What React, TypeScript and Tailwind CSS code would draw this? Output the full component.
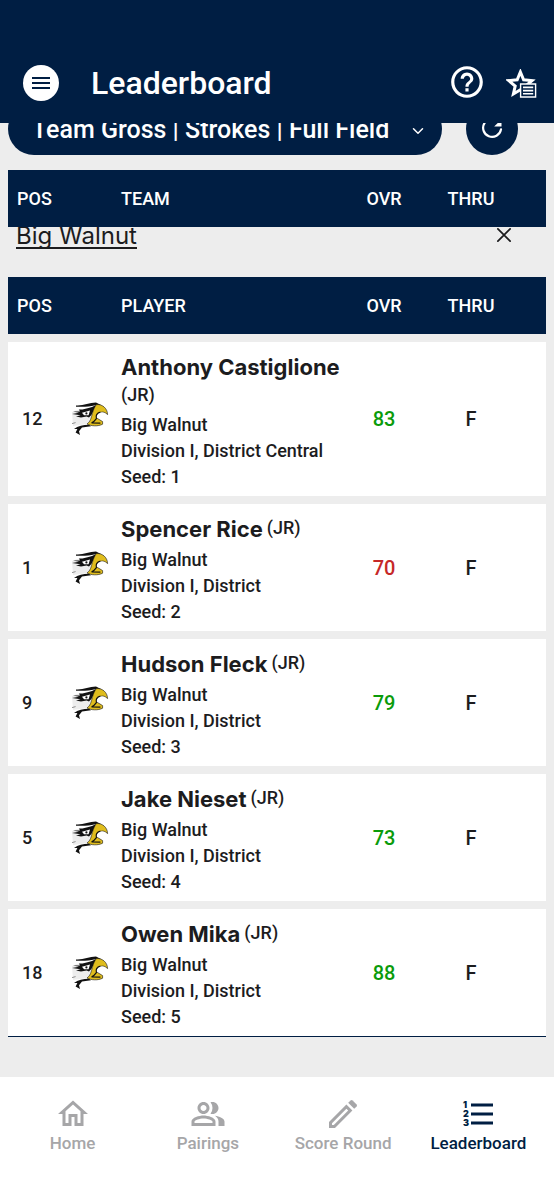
import { MdHelpOutline, MdOutlineHome, MdOutlinePeopleAlt } from "react-icons/md";
import { IoChevronDown, IoCloseOutline } from "react-icons/io5";

const PencilIcon = ({ className }: { className?: string }) => (
  <svg viewBox="0 0 36 36" className={className} fill="currentColor" aria-hidden="true">
    <path
      fillRule="evenodd"
      d="M4 32 V26 L21.4 8.6 L27.4 14.6 L10 32 Z M7 29 H8.8 L23.2 14.6 L21.4 12.8 L7 27.2 Z"
    />
    <path d="M23.2 6.8 L25.6 4.4 Q26.6 3.6 27.6 4.4 L31.6 8.4 Q32.4 9.4 31.6 10.4 L29.2 12.8 Z" />
  </svg>
);

const RankListIcon = ({ className }: { className?: string }) => (
  <svg viewBox="0 0 36 36" className={className} fill="currentColor" aria-hidden="true">
    <path d="M11 7.5 H33 V10.5 H11 Z M11 16.5 H33 V19.5 H11 Z M11 25.5 H33 V28.5 H11 Z" />
    <g fontSize="9" fontWeight="900" fontFamily="Inter, sans-serif">
      <text x="3" y="12">1</text>
      <text x="3" y="21">2</text>
      <text x="3" y="30">3</text>
    </g>
  </svg>
);

const players = [
  { pos: 12, name: "Anthony Castiglione", division: "Division I, District Central", seed: 1, score: 83, over: true },
  { pos: 1, name: "Spencer Rice", division: "Division I, District", seed: 2, score: 70, over: false },
  { pos: 9, name: "Hudson Fleck", division: "Division I, District", seed: 3, score: 79, over: true },
  { pos: 5, name: "Jake Nieset", division: "Division I, District", seed: 4, score: 73, over: true },
  { pos: 18, name: "Owen Mika", division: "Division I, District", seed: 5, score: 88, over: true },
];

const tabs = [
  { label: "Home", icon: MdOutlineHome, active: false },
  { label: "Pairings", icon: MdOutlinePeopleAlt, active: false },
  { label: "Score Round", icon: PencilIcon, active: false },
  { label: "Leaderboard", icon: RankListIcon, active: true },
];

const EagleLogo = () => (
  <svg viewBox="0 0 38 34" className="w-[38px] h-[34px]" aria-hidden="true">
    <path d="M1 10 L9 7 L20 14 L17 22 L2 24 Z" fill="#ededed" />
    <path d="M5 3.4 C12 4 18 .6 25 .6 L30 3 C24 2.4 19 4.8 14 4.8 L5 4.8 Z" fill="#111" />
    <path d="M8 7.6 C13 7.6 16 6.4 21 5 L24 3.6 L27 3.6 L22.4 9 L20.4 13 L18 15.6 L15.6 14.6 L10 15.4 L5 14.4 L9.6 13.2 L1 12 L8 10.8 L2 9.4 L9 9.4 Z" fill="#111" />
    <path d="M11 10.8 L19 8.6 L17.6 13.2 L13 13.2 Z" fill="#fff" />
    <circle cx="15.4" cy="11.4" r="1.1" fill="#111" />
    <path
      d="M25.4 2.6 C31 2 36.4 6 36.6 12.6 C34 10 32 9.6 29.4 10.4 C26 11.4 25.2 13.6 26 16.2 L31.6 19.6 L31.6 22.2 C27 24.6 20 24.2 16 22 C19.6 19.6 20.2 15.6 21.4 11.4 C22.4 7.6 23.6 5 25.4 2.6 Z"
      fill="#e0bd1d"
      stroke="#111"
      strokeWidth="0.6"
    />
    <path d="M29.4 10.4 L34 11 L28 15.6 L26 16.2 C25.2 13.6 26 11.4 29.4 10.4 Z" fill="#fff" />
    <path d="M29.4 10.2 C25.6 11 24.6 13.8 25.4 16.6 C24 18.6 22.4 20 20.6 20.8 L29.4 21.2" fill="none" stroke="#111" strokeWidth="1.2" />
    <path d="M1 21.6 L4.6 20.6" stroke="#777" strokeWidth="0.8" />
    <path d="M18 22.8 C12 22.8 7 24 3 27 L6.4 27 L4.6 30.6 L9 33 L8 29.2 L11 25.6 L20 24.2 Z" fill="#111" />
  </svg>
);

const StarListIcon = () => (
  <svg viewBox="0 0 32 32" className="w-8 h-8" fill="none" aria-hidden="true">
    <path
      d="M14.4 3 L17.6 10.8 L26 11.6 L19.6 17 L21.5 25 L14.4 20.8 L7.4 25 L9.2 17 L2.8 11.6 L11.2 10.8 Z"
      stroke="#fff"
      strokeWidth="3"
    />
    <path d="M14.6 15 H29.6 V28 H14.6 Z" fill="#001e43" stroke="#fff" strokeWidth="1.4" />
    <path d="M17 18.4 H27.2 M17 21.6 H27.2 M17 24.8 H27.2" stroke="#fff" strokeWidth="1.6" />
  </svg>
);

const RefreshIcon = () => (
  <svg viewBox="0 0 24 24" className="size-6" fill="none" stroke="#fff" strokeWidth="2.2" strokeLinecap="round" aria-hidden="true">
    <path d="M18.5 4.5 A9 9 0 1 0 21 12.4" />
    <path d="M21.5 2.2 V9.6 H14.2 Z" fill="#fff" stroke="none" />
  </svg>
);

const TableHead = ({ title }: { title: string }) => (
  <thead>
    <tr className="h-[57px] bg-[#001e43] text-white">
      <th scope="col" colSpan={2} className="w-[113px] pl-[9px] text-left font-medium">POS</th>
      <th scope="col" className="text-left font-medium">{title}</th>
      <th scope="col" className="w-[84px] text-center font-medium">OVR</th>
      <th scope="col" className="w-[90px] text-center font-medium">THRU</th>
      <th className="w-[30px]" />
    </tr>
  </thead>
);

const App = () => {
  return (
    <div className="flex min-h-screen flex-col bg-[#ededed] font-[Roboto,sans-serif] text-lg text-[#1c1c1e]">
      <header className="flex h-[123px] items-end bg-[#001e43] pb-[22px] pl-[23px] pr-4 text-white">
        <button aria-label="Menu" className="flex size-9 items-center justify-center rounded-full bg-white">
          <svg viewBox="0 0 18 12" className="w-[18px] h-3" stroke="#001e43" strokeWidth="2" aria-hidden="true">
            <path d="M0 1 H18 M0 6 H18 M0 11 H18" />
          </svg>
        </button>
        <h1 className="ml-8 flex-1 text-[32px] leading-9 font-medium">Leaderboard</h1>
        <button aria-label="Help">
          <MdHelpOutline className="size-[38px]" />
        </button>
        <button aria-label="Favorites" className="ml-5">
          <StarListIcon />
        </button>
      </header>

      <main className="flex-1 px-2">
        <div className="flex h-8 items-end gap-6 overflow-hidden">
          <button className="flex h-[52px] w-[434px] shrink-0 items-center justify-between rounded-[26px] bg-[#001e43] pt-[3px] pl-6 pr-4 text-[25px] font-medium text-white">
            Team Gross | Strokes | Full Field
            <IoChevronDown className="size-4" />
          </button>
          <button aria-label="Refresh" className="flex size-[52px] shrink-0 items-center justify-center rounded-full bg-[#001e43]">
            <RefreshIcon />
          </button>
        </div>

        <table className="mt-[15px] w-full table-fixed border-collapse">
          <TableHead title="TEAM" />
        </table>

        <div className="flex h-[42px] items-end justify-between overflow-hidden pl-2 pr-[28px] pb-5 font-[Inter,sans-serif]">
          <h2 className="border-b-2 border-[#1c1c1e] text-2xl leading-[22px]">Big Walnut</h2>
          <button aria-label="Close team">
            <IoCloseOutline className="size-7" />
          </button>
        </div>

        <table className="w-full table-fixed border-separate border-spacing-x-0 border-spacing-y-2">
          <TableHead title="PLAYER" />
          <tbody className="font-medium">
            {players.map((player) => (
              <tr key={player.name} className="bg-white *:border-[#001e43] last:*:border-b">
                <td className="pl-[14px]">{player.pos}</td>
                <td className="pl-[6px]">
                  <EagleLogo />
                </td>
                <td className="pt-[11px] pb-[6px] leading-[26px]">
                  <div className="mb-1 flex flex-wrap items-start gap-x-1 gap-y-px">
                    <span className="whitespace-nowrap font-[Inter,sans-serif] text-[22px] leading-7 font-bold">{player.name}</span>
                    <span className="leading-[26px]">(JR)</span>
                  </div>
                  <p>Big Walnut</p>
                  <p className="whitespace-nowrap">{player.division}</p>
                  <p>Seed: {player.seed}</p>
                </td>
                <td className={player.over ? "text-center text-xl text-[#0a9b0a]" : "text-center text-xl text-[#c62828]"}>
                  {player.score}
                </td>
                <td className="text-center text-xl">F</td>
                <td />
              </tr>
            ))}
          </tbody>
        </table>
      </main>

      <nav className="grid h-[123px] grid-cols-4 bg-white pl-[5px] pr-2 text-[17px] font-medium">
        {tabs.map((tab) => (
          <a
            key={tab.label}
            href="#"
            className={
              tab.active
                ? "flex flex-col items-center pt-[19px] text-[#001e43]"
                : "flex flex-col items-center pt-[19px] text-[#a6a6a8]"
            }
          >
            <tab.icon className="size-9" />
            <span className="leading-[22px]">{tab.label}</span>
          </a>
        ))}
      </nav>
    </div>
  );
};

export default App;
